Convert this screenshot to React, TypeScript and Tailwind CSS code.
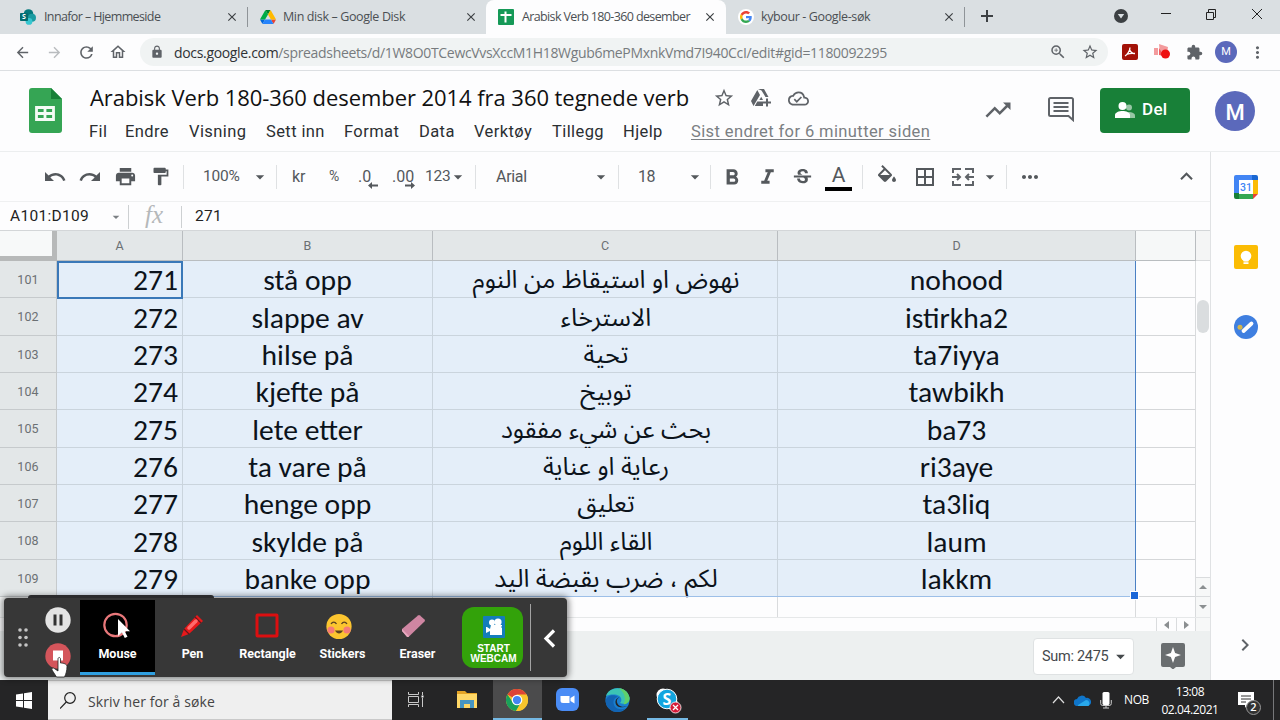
import type { ReactNode } from 'react'
import {
  MdArrowBack,
  MdArrowDropDown,
  MdArrowForward,
  MdBorderAll,
  MdClose,
  MdExtension,
  MdFormatBold,
  MdFormatItalic,
  MdFormatPaint,
  MdKeyboardArrowUp,
  MdLock,
  MdMoreHoriz,
  MdMoreVert,
  MdOutlineCloudDone,
  MdOutlineHome,
  MdPrint,
  MdRedo,
  MdRefresh,
  MdStarBorder,
  MdStrikethroughS,
  MdTrendingUp,
  MdUndo,
  MdOutlineZoomIn,
  MdChevronRight,
} from 'react-icons/md'

const rows = [
  { n: 101, id: '271', no: 'stå opp', ar: 'نهوض او استيقاظ من النوم', tr: 'nohood' },
  { n: 102, id: '272', no: 'slappe av', ar: 'الاسترخاء', tr: 'istirkha2' },
  { n: 103, id: '273', no: 'hilse på', ar: 'تحية', tr: 'ta7iyya' },
  { n: 104, id: '274', no: 'kjefte på', ar: 'توبيخ', tr: 'tawbikh' },
  { n: 105, id: '275', no: 'lete etter', ar: 'بحث عن شيء مفقود', tr: 'ba73' },
  { n: 106, id: '276', no: 'ta vare på', ar: 'رعاية او عناية', tr: 'ri3aye' },
  { n: 107, id: '277', no: 'henge opp', ar: 'تعليق', tr: 'ta3liq' },
  { n: 108, id: '278', no: 'skylde på', ar: 'القاء اللوم', tr: 'laum' },
  { n: 109, id: '279', no: 'banke opp', ar: 'لكم ، ضرب بقبضة اليد', tr: 'lakkm' },
]

const menus = [
  { label: 'Fil', className: 'w-9' },
  { label: 'Endre', className: 'w-16' },
  { label: 'Visning', className: 'w-[77px]' },
  { label: 'Sett inn', className: 'w-[78px]' },
  { label: 'Format', className: 'w-[75px]' },
  { label: 'Data', className: 'w-[55px]' },
  { label: 'Verktøy', className: 'w-[78px]' },
  { label: 'Tillegg', className: 'w-[71px]' },
  { label: 'Hjelp', className: 'w-[68px]' },
]

function SharepointIcon() {
  return (
    <svg className="shrink-0" width="16" height="16" viewBox="0 0 16 16">
      <circle cx="8.5" cy="5" r="4.8" fill="#03787c" />
      <circle cx="12" cy="8.8" r="4" fill="#1a9ba1" />
      <circle cx="9" cy="12.4" r="3.4" fill="#37c6d0" />
      <rect y="4" width="8" height="8" rx="0.8" fill="#036c70" />
      <text x="4" y="10.4" textAnchor="middle" fontSize="7" fontWeight="700" fill="#fff" fontFamily="Open Sans">S</text>
    </svg>
  )
}

function DriveIcon() {
  return (
    <svg className="shrink-0" width="16" height="14" viewBox="0 0 87.3 78">
      <path d="m6.6 66.85 3.85 6.65c.8 1.4 1.95 2.5 3.3 3.3l13.75-23.8h-27.5c0 1.55.4 3.1 1.2 4.5z" fill="#0066da" />
      <path d="m43.65 25-13.75-23.8c-1.35.8-2.5 1.9-3.3 3.3l-25.4 44a9.06 9.06 0 0 0 -1.2 4.5h27.5z" fill="#00ac47" />
      <path d="m73.55 76.8c1.35-.8 2.5-1.9 3.3-3.3l1.6-2.75 7.65-13.25c.8-1.4 1.2-2.95 1.2-4.5h-27.5l5.85 11.5z" fill="#ea4335" />
      <path d="m43.65 25 13.75-23.8c-1.35-.8-2.9-1.2-4.5-1.2h-18.5c-1.6 0-3.15.45-4.5 1.2z" fill="#00832d" />
      <path d="m59.8 53h-32.3l-13.75 23.8c1.35.8 2.9 1.2 4.5 1.2h50.8c1.6 0 3.15-.45 4.5-1.2z" fill="#2684fc" />
      <path d="m73.4 26.5-12.7-22c-.8-1.4-1.95-2.5-3.3-3.3l-13.75 23.8 16.15 28h27.45c0-1.55-.4-3.1-1.2-4.5z" fill="#ffba00" />
    </svg>
  )
}

function SheetsFavicon() {
  return (
    <svg className="shrink-0" width="16" height="16" viewBox="0 0 16 16">
      <rect width="16" height="16" rx="1" fill="#159957" />
      <path d="M7.5 2.5v11M2.5 6h11" stroke="#fff" strokeWidth="2" fill="none" />
    </svg>
  )
}

function GoogleIcon() {
  return (
    <svg className="shrink-0" width="16" height="16" viewBox="0 0 48 48">
      <circle cx="24" cy="24" r="24" fill="#fff" />
      <g transform="translate(6 6) scale(.75)">
        <path fill="#EA4335" d="M24 9.5c3.54 0 6.71 1.22 9.21 3.6l6.85-6.85C35.9 2.38 30.47 0 24 0 14.62 0 6.51 5.38 2.56 13.22l7.98 6.19C12.43 13.72 17.74 9.5 24 9.5z" />
        <path fill="#4285F4" d="M46.98 24.55c0-1.57-.15-3.09-.38-4.55H24v9.02h12.94c-.58 2.96-2.26 5.48-4.78 7.18l7.73 6c4.51-4.18 7.09-10.36 7.09-17.65z" />
        <path fill="#FBBC05" d="M10.53 28.59A14.5 14.5 0 0 1 9.77 24c0-1.6.27-3.14.76-4.59l-7.98-6.19A23.9 23.9 0 0 0 0 24c0 3.88.92 7.54 2.56 10.78l7.97-6.19z" />
        <path fill="#34A853" d="M24 48c6.48 0 11.93-2.13 15.89-5.81l-7.73-6c-2.15 1.45-4.92 2.3-8.16 2.3-6.26 0-11.57-4.22-13.47-9.91l-7.98 6.19C6.51 42.62 14.62 48 24 48z" />
      </g>
    </svg>
  )
}

function TabStrip() {
  return (
    <div className="flex h-[34px] shrink-0 bg-[#dadfe2] font-['Open_Sans','Noto_Sans',sans-serif] text-[12.5px] text-[#4b4f53]">
      <div className="flex w-[248px] items-center pl-5">
        <SharepointIcon />
        <span className="ml-2 w-[181px] shrink-0 whitespace-nowrap tracking-[-0.62px]">Innafor – Hjemmeside</span>
        <MdClose className="shrink-0 text-[#3c4043]" size={14} />
        <div className="ml-2 h-5 w-px shrink-0 bg-[#8f9498]" />
      </div>
      <div className="flex w-[238px] items-center pl-3">
        <DriveIcon />
        <span className="ml-[7px] w-[181px] shrink-0 whitespace-nowrap tracking-[-0.38px]">Min disk – Google Disk</span>
        <MdClose className="shrink-0 text-[#3c4043]" size={14} />
      </div>
      <div className="flex w-[240px] items-center rounded-t-lg bg-[#fdfdfe] pl-3">
        <SheetsFavicon />
        <span className="ml-2 w-[181px] shrink-0 whitespace-nowrap tracking-[-0.63px]">Arabisk Verb 180-360 desember</span>
        <MdClose className="shrink-0 text-[#3c4043]" size={14} />
      </div>
      <div className="flex w-[239px] items-center pl-3">
        <GoogleIcon />
        <span className="ml-[7px] w-[181px] shrink-0 whitespace-nowrap tracking-[-0.38px]">kybour - Google-søk</span>
        <MdClose className="shrink-0 text-[#3c4043]" size={14} />
        <div className="ml-2 h-5 w-px shrink-0 bg-[#8f9498]" />
      </div>
      <svg className="ml-4 mt-2.5" width="12" height="12" viewBox="0 0 12 12">
        <path d="M6 0v12M0 6h12" stroke="#3c4043" strokeWidth="2" />
      </svg>
      <svg className="ml-[121px] mt-[9px]" width="14" height="14" viewBox="0 0 14 14">
        <circle cx="7" cy="7" r="7" fill="#3c4043" />
        <path d="M3.8 5h6.4L7 9.5z" fill="#dadfe2" />
      </svg>
      <svg className="ml-[33px] mt-2" width="102" height="13" viewBox="0 0 102 13" fill="none" stroke="#222">
        <path d="M0 5.500h10M45.500 4.500h7v7h-7zM47.500 4.500v-3h7v8h-2M91 1l10 10M101 1l-10 10" />
      </svg>
    </div>
  )
}

function AddressBar() {
  return (
    <div className="flex h-[37px] shrink-0 items-center border-b border-[#dcdfe2] bg-[#fdfdfe] text-[#5f6368]">
      <MdArrowBack className="ml-3.5 shrink-0" size={17} />
      <MdArrowForward className="ml-[15px] shrink-0 text-[#b9bcbf]" size={17} />
      <MdRefresh className="ml-[14px] shrink-0" size={19} />
      <MdOutlineHome className="ml-[13px] shrink-0" size={18} />
      <div className="ml-[13px] flex h-[28px] w-[968px] shrink-0 items-center rounded-full bg-[#f0f3f3] pl-2.5 font-['Open_Sans','Noto_Sans',sans-serif] text-[14px]">
        <MdLock size={14} className="mr-[10px] shrink-0" />
        <div className="w-[875px] shrink-0 whitespace-nowrap tracking-[-0.33px] text-[#777b7e]">
          <span className="text-[#2f3235]">docs.google.com</span>/spreadsheets/d/1W8O0TCewcVvsXccM1H18Wgub6mePMxnkVmd7I940CcI/edit#gid=1180092295
        </div>
        <MdOutlineZoomIn className="shrink-0" size={18} />
        <MdStarBorder className="ml-[14px] shrink-0" size={18} />
      </div>
      <Extensions />
    </div>
  )
}

function Extensions() {
  return (
    <div className="ml-3.5 flex shrink-0 items-center">
      <svg width="16" height="16" viewBox="0 0 16 16">
        <rect width="16" height="16" rx="2" fill="#a31208" />
        <path d="M3 12c2-1 5-5 5-8.500M7.700 6c.8 2 3 3.500 5.300 3.500M4.500 10.500c2-.8 5-1.500 8-1" stroke="#fff" strokeWidth="1.300" fill="none" />
      </svg>
      <svg className="ml-4" width="17" height="16" viewBox="0 0 17 16">
        <path d="M0 4h4v7H0zM5 0l9 3-1 6-7 1z" fill="#f39b9d" />
        <path d="m5 4 5 8-5-1z" fill="#f05b60" />
        <circle cx="11.500" cy="10" r="4.500" fill="#ee1111" />
      </svg>
      <MdExtension className="ml-[15px] text-[#5f6368]" size={17} />
      <div className="ml-3 flex size-[22px] items-center justify-center rounded-full bg-[#5b69bb] text-[11px] text-white">M</div>
      <MdMoreVert className="ml-[11px] text-[#5f6368]" size={19} />
    </div>
  )
}

function AddToDriveIcon() {
  return (
    <svg className="ml-[15px] shrink-0" width="22" height="20" viewBox="0 0 22 20" fill="#5f6368">
      <path d="M8 1h6l4.500 8h-3L11.500 2.500zM7.300 2 10 7 3.500 18 1 13zM4.800 18l2.500-4.500H13V18z" />
      <path d="M11.200 8.800 13 12h-3.600z" />
      <path d="M16 10.500h2v3h3v2h-3v3h-2v-3h-3v-2h3z" />
    </svg>
  )
}

function DocHeader() {
  return (
    <div className="flex h-[81px] shrink-0 border-b border-[#eceeef]">
      <svg className="ml-[29px] mt-[17px] shrink-0" width="33" height="45" viewBox="0 0 33 45">
        <path d="M3 0h19l11 11v31a3 3 0 0 1-3 3H3a3 3 0 0 1-3-3V3a3 3 0 0 1 3-3z" fill="#35a554" />
        <path d="M22 0l11 11H22z" fill="#188038" />
        <path d="M7.500 19.500h17v12h-17zM7.500 25.500h17M16 19.500v12" fill="none" stroke="#f4fbf5" strokeWidth="2.800" />
      </svg>
      <div className="ml-[27px] w-[895px] shrink-0">
        <div className="mt-3 flex h-[30px] items-center text-[#5f6368]">
          <div className="-mt-px w-[624px] shrink-0 whitespace-nowrap pl-px font-['Open_Sans',sans-serif] text-[22px] tracking-[-0.06px] text-[#111]">
            Arabisk Verb 180-360 desember 2014 fra 360 tegnede verb
          </div>
          <MdStarBorder className="shrink-0" size={22} />
          <AddToDriveIcon />
          <MdOutlineCloudDone className="ml-4 shrink-0" size={21} />
        </div>
        <div className="mt-[9px] flex text-[16.5px] leading-5 tracking-[0.4px] text-[#2b2f32]">
          {menus.map((m) => (
            <div key={m.label} className={`${m.className} shrink-0 whitespace-nowrap`}>{m.label}</div>
          ))}
          <span className="whitespace-nowrap tracking-[0.4px] text-[#7b7f83] underline underline-offset-2">
            Sist endret for 6 minutter siden
          </span>
        </div>
      </div>
      <MdTrendingUp className="-ml-px mt-6 shrink-0 text-[#5f6368]" size={30} />
      <svg className="ml-[35px] mt-[26px] shrink-0" width="26" height="25" viewBox="0 0 26 25">
        <path d="M2.500 1h21A1.500 1.500 0 0 1 25 2.500V23l-4.500-4h-18A1.500 1.500 0 0 1 1 17.500v-15A1.500 1.500 0 0 1 2.500 1z" fill="none" stroke="#5f6368" strokeWidth="2" />
        <path d="M5.500 6h15M5.500 10h15M5.500 14h15" stroke="#5f6368" strokeWidth="2" />
      </svg>
      <div className="ml-[26px] mt-[17px] flex h-[45px] w-[90px] shrink-0 items-center rounded bg-[#188038] pb-px pl-[15px] text-[17px] font-medium tracking-[0.3px] text-white">
        <svg className="mr-[7px] shrink-0" width="20" height="16" viewBox="0 0 20 16" fill="#fff">
          <circle cx="14" cy="5.500" r="3" opacity=".55" />
          <path d="M13 10c4 0 7 1.500 7 3.500V16h-6z" opacity=".55" />
          <circle cx="7.500" cy="4" r="4" />
          <path d="M0 16v-3c0-2.500 4-4 7.500-4s7.500 1.500 7.500 4v3z" />
        </svg>
        <span>Del</span>
      </div>
      <div className="ml-[25px] mt-5 flex size-10 shrink-0 items-center justify-center rounded-full bg-[#5b69bb] pt-0.5 text-[22px] font-medium text-white">
        M
      </div>
    </div>
  )
}

function Divider({ className }: { className: string }) {
  return <div className={`${className} h-6 w-px shrink-0 bg-[#dfe1e3]`} />
}

function DecimalIcon({ text, className, back }: { text: string; className: string; back?: boolean }) {
  return (
    <span className={`${className} relative shrink-0 text-[16px]`}>
      {text}
      <svg className={back ? 'absolute left-2.5 top-[17px]' : 'absolute left-[13px] top-[17px]'} width="10" height="7" viewBox="0 0 10 7">
        <path d={back ? 'M10 2.500H4V0L0 3.500 4 7V4.500h6z' : 'M0 2.500h6V0l4 3.500L6 7V4.500H0z'} fill="#54585c" />
      </svg>
    </span>
  )
}

function Toolbar() {
  return (
    <div className="flex h-[50px] shrink-0 items-center border-b border-[#eff0f1] text-[16px] text-[#54585c]">
      <MdUndo className="ml-[43px] shrink-0" size={24} />
      <MdRedo className="ml-[11px] shrink-0" size={24} />
      <MdPrint className="ml-3 shrink-0" size={23} />
      <MdFormatPaint className="ml-[13px] shrink-0" size={21} />
      <Divider className="ml-3" />
      <span className="ml-[19px] w-[41px] shrink-0 text-[15.5px] tracking-[-0.2px]">100%</span>
      <MdArrowDropDown className="ml-[6px] shrink-0" size={20} />
      <Divider className="ml-1.5" />
      <span className="ml-[15px] w-[37px] shrink-0">kr</span>
      <span className="w-[29px] shrink-0 text-[14px]">%</span>
      <DecimalIcon text=".0" className="w-[34px]" back />
      <DecimalIcon text=".00" className="w-[33px]" />
      <span className="w-[24px] shrink-0 text-[15.5px] tracking-[-0.2px]">123</span>
      <MdArrowDropDown className="ml-[-1px] shrink-0" size={20} />
      <Divider className="ml-[7px]" />
      <span className="ml-5 w-[94px] shrink-0 tracking-[-0.3px]">Arial</span>
      <MdArrowDropDown className="ml-px shrink-0" size={20} />
      <Divider className="ml-[7px]" />
      <span className="ml-[19px] w-[47px] shrink-0 tracking-[-0.4px]">18</span>
      <MdArrowDropDown className="shrink-0" size={20} />
      <Divider className="ml-[5px]" />
      <MdFormatBold className="ml-2 mt-0.5 shrink-0" size={26} />
      <MdFormatItalic className="ml-[10px] mt-0.5 shrink-0" size={25} />
      <MdStrikethroughS className="ml-[11px] mt-0.5 shrink-0" size={23} />
      <div className="ml-[11px] flex h-7 w-[27px] shrink-0 items-start justify-center border-b-4 border-black text-[21px] leading-[24px]">A</div>
      <Divider className="ml-[10px]" />
      <svg className="ml-3 shrink-0" width="24" height="24" viewBox="0 0 24 24" fill="currentColor">
        <path d="M16.560 8.940 7.620 0 6.210 1.410l2.380 2.380-5.150 5.150c-.59.59-.59 1.540 0 2.120l5.500 5.500c.29.29.68.44 1.060.44s.77-.15 1.060-.44l5.500-5.500c.59-.58.59-1.530 0-2.120zM5.210 10 10 5.210 14.790 10zM19 11.500s-2 2.170-2 3.500c0 1.100.9 2 2 2s2-.9 2-2c0-1.330-2-3.500-2-3.500z" />
      </svg>
      <MdBorderAll className="ml-3.5 shrink-0" size={24} />
      <svg className="ml-[15px] shrink-0" width="22" height="18" viewBox="0 0 22 18" fill="none" stroke="#5f6368" strokeWidth="2">
        <path d="M9 1H1v4M13 1h8v4M9 17H1v-4M13 17h8v-4M0 9h7M22 9h-7M5 6l3 3-3 3M17 6l-3 3 3 3" />
      </svg>
      <MdArrowDropDown className="ml-[6px] shrink-0" size={20} />
      <Divider className="ml-[6px]" />
      <MdMoreHoriz className="ml-[11px] shrink-0" size={24} />
      <MdKeyboardArrowUp className="ml-[132px] shrink-0" size={25} />
    </div>
  )
}

function FormulaBar() {
  return (
    <div className="flex h-[29px] shrink-0 items-center border-b border-[#d3d6d8] pt-0.5 text-[15.5px] text-[#222]">
      <span className="ml-2.5 w-[98px] shrink-0 tracking-[0.3px]">A101:D109</span>
      <MdArrowDropDown className="shrink-0 text-[#7b7f83]" size={16} />
      <div className="ml-1 h-6 w-px bg-[#cdd0d2]" />
      <span className="ml-4 w-9 pb-1 font-['Liberation_Serif',serif] text-[25px] italic leading-6 text-[#b5b8ba]">fx</span>
      <div className="h-[22px] w-px bg-[#cdd0d2]" />
      <span className="ml-[13px] tracking-[0.3px]">271</span>
    </div>
  )
}

function ColumnHead({ label, className }: { label?: string; className: string }) {
  return (
    <div className={`${className} flex shrink-0 items-center justify-center border-b border-r border-[#b9bdc0] pt-px text-[12.5px] text-[#6b7073]`}>
      {label}
    </div>
  )
}

function Cell({ className, children }: { className: string; children?: ReactNode }) {
  return (
    <div className={`${className} flex shrink-0 items-center whitespace-nowrap border-b border-r border-[#cad4dd] bg-[#e4eef9]`}>
      {children}
    </div>
  )
}

function ScrollButton({ className, d }: { className: string; d: string }) {
  return (
    <div className={`${className} flex items-center justify-center border-[#dadcde] bg-[#f7f8f8]`}>
      <svg width="8" height="6" viewBox="0 0 8 6"><path d={d} fill="#8b8f91" /></svg>
    </div>
  )
}

function Grid() {
  return (
    <div className="flex h-[386px] shrink-0 overflow-hidden">
      <div className="relative w-[1196px] shrink-0 border-r border-[#d9dbdd]">
        <div className="flex h-[30px]">
          <div className="w-[57px] shrink-0 border-b-[5px] border-r-[5px] border-[#b7b9b9] bg-[#f7f9f9]" />
          <ColumnHead label="A" className="w-[126px] bg-[#e3e7e8]" />
          <ColumnHead label="B" className="w-[250px] bg-[#e3e7e8]" />
          <ColumnHead label="C" className="w-[345px] bg-[#e3e7e8]" />
          <ColumnHead label="D" className="w-[358px] bg-[#e3e7e8]" />
          <ColumnHead className="w-[60px] bg-[#f6f8f8]" />
        </div>
        {rows.map((r) => (
          <div key={r.n} className="flex h-[37.35px] font-['Carlito','Lato',sans-serif] text-[29.6px] leading-none text-[#0c131b]">
            <div className="flex w-[57px] shrink-0 items-center justify-center border-b border-r border-[#c6cacc] bg-[#e3e7e8] pt-0.5 font-[Roboto] text-[12.5px] tracking-[0.2px] text-[#6b7073]">
              {r.n}
            </div>
            <Cell className="w-[126px] justify-end pr-1 pt-1">{r.id}</Cell>
            <Cell className="w-[250px] justify-center pt-1">{r.no}</Cell>
            <Cell className="w-[345px] justify-center pl-0.5 pt-[3px]">
              <span dir="rtl" className="font-['Noto_Sans_Arabic','Noto_Sans',sans-serif] text-[25px]">{r.ar}</span>
            </Cell>
            <Cell className="w-[358px] justify-center pt-1">{r.tr}</Cell>
            <div className="w-[60px] border-b border-[#d5d7d9]" />
          </div>
        ))}
        <div className="flex h-5">
          <div className="w-[57px] border-r border-[#c6cacc] bg-[#f6f8f8]" />
          <div className="w-[376px] border-r border-[#d9dbdd]" />
          <div className="w-[345px] border-r border-[#d9dbdd]" />
          <div className="w-[358px] border-r border-[#d9dbdd]" />
        </div>
        <div className="absolute left-[57px] top-[30px] h-[336px] w-[1079px] border-b border-r border-b-[#9dbfe8] border-r-[#4a80c4]" />
        <div className="absolute left-[57px] top-[30px] h-[38px] w-[126px] border-2 border-[#3a78b8]" />
        <div className="absolute left-[1130px] top-[360px] size-[9px] border border-white bg-[#1b67d8]" />
      </div>
      <div className="flex w-[14px] flex-col">
        <div className="h-[30px] border-b border-[#d9dbdd] bg-[#f4f5f5]" />
        <div className="mx-px mt-[39px] h-[33px] rounded-full bg-[#dadddf]" />
        <div className="flex-1" />
        <ScrollButton className="h-5 w-full border-y" d="M0 5l4-4 4 4z" />
        <ScrollButton className="h-5 w-full" d="M0 1l4 4 4-4z" />
      </div>
    </div>
  )
}

function BottomBar() {
  return (
    <>
      <div className="flex h-[14px] shrink-0 border-t border-[#e6e8e9]">
        <div className="w-[1156px]" />
        <div className="flex w-5 items-center justify-center border-l border-[#dadcde]">
          <svg width="5" height="8" viewBox="0 0 5 8"><path d="M5 0v8L0 4z" fill="#8b8f91" /></svg>
        </div>
        <div className="flex w-5 items-center justify-center border-x border-[#dadcde]">
          <svg width="5" height="8" viewBox="0 0 5 8"><path d="M0 0v8l5-4z" fill="#8b8f91" /></svg>
        </div>
        <div className="flex-1 bg-[#f7f8f8]" />
      </div>
      <div className="flex h-[49px] shrink-0 bg-[#edf0f0]">
        <div className="ml-[1033px] mt-[7px] flex h-[37px] w-[101px] items-center rounded border border-[#dfe2e3] bg-white pl-2 text-[14.5px] text-[#45494c]">
          <span className="w-[68px] shrink-0 whitespace-nowrap tracking-[-0.3px]">Sum: 2475</span>
          <MdArrowDropDown className="shrink-0" size={21} />
        </div>
        <svg className="ml-[27px] mt-3" width="24" height="26" viewBox="0 0 24 26">
          <path d="M2 0h20a2 2 0 0 1 2 2v20a2 2 0 0 1-2 2h-7l-3 2.500L9 24H2a2 2 0 0 1-2-2V2a2 2 0 0 1 2-2z" fill="#6a6e70" />
          <path d="M12 4l2.100 5.900L20 12l-5.900 2.100L12 20l-2.100-5.900L4 12l5.900-2.100z" fill="#fff" />
        </svg>
      </div>
    </>
  )
}

function SidePanel() {
  return (
    <div className="flex w-[70px] shrink-0 flex-col items-center border-l border-[#e0e2e4] pl-px">
      <svg className="mt-[23px]" width="24" height="24" viewBox="0 0 24 24">
        <path d="M2 0h16v5H5v13H0V2a2 2 0 0 1 2-2z" fill="#4285f4" />
        <path d="M18 0h4a2 2 0 0 1 2 2v3h-6z" fill="#1967d2" />
        <path d="M19 5h5v14h-5z" fill="#fbbc04" />
        <path d="M5 19h14v5H5z" fill="#34a853" />
        <path d="M0 18h5v6H2a2 2 0 0 1-2-2z" fill="#188038" />
        <path d="M19 19h5l-5 5z" fill="#ea4335" />
        <path d="M5 5h14v14H5z" fill="#fff" />
        <text x="12" y="15.800" textAnchor="middle" fontSize="10.500" fontWeight="500" fill="#4285f4" fontFamily="Roboto">31</text>
      </svg>
      <svg className="mt-[46px]" width="24" height="24" viewBox="0 0 24 24">
        <rect width="24" height="24" rx="2" fill="#fbbc04" />
        <circle cx="12" cy="11" r="5.300" fill="#fff" />
        <path d="M9.500 14h5v2.500h-5zM9.500 17.300h5V19h-5z" fill="#fff" />
      </svg>
      <svg className="mt-[46px]" width="24" height="24" viewBox="0 0 24 24">
        <circle cx="12" cy="12" r="12" fill="#3f7fe0" />
        <path d="M9.500 16 17.500 8.500" stroke="#fff" strokeWidth="3.800" strokeLinecap="round" />
        <circle cx="6" cy="12.300" r="2.500" fill="#d6b64a" />
      </svg>
      <MdChevronRight className="mr-0.5 mt-[294px] text-[#5f6368]" size={24} />
    </div>
  )
}

function Tool({ label, active, children }: { label: string; active?: boolean; children: ReactNode }) {
  return (
    <div className={`flex h-[75px] w-[75px] shrink-0 flex-col items-center pt-3 ${active ? 'border-b-[3px] border-[#2f9fe0] bg-black' : ''}`}>
      <div className="flex h-[28px] items-center">{children}</div>
      <span className="mt-[6px] text-[12.5px] font-bold leading-4 text-white">{label}</span>
    </div>
  )
}

function RecorderBar() {
  return (
    <div className="absolute left-1 top-[598px] z-10 flex h-[79px] w-[563px] rounded bg-[#373737] pt-0.5 shadow-[0_0_6px_2px_rgba(0,0,0,0.45)]">
      <div className="absolute -top-[3px] left-6 h-[3px] w-[186px] rounded-t bg-[#2b2b2d]" />
      <svg className="ml-3.5 mt-[28px] shrink-0" width="10" height="20" viewBox="0 0 10 20" fill="#c5c5c5">
        <circle cx="2" cy="2" r="1.800" /><circle cx="8" cy="2" r="1.800" />
        <circle cx="2" cy="9.500" r="1.800" /><circle cx="8" cy="9.500" r="1.800" />
        <circle cx="2" cy="17" r="1.800" /><circle cx="8" cy="17" r="1.800" />
      </svg>
      <div className="ml-[17px] mr-[9px] mt-[7px] flex shrink-0 flex-col gap-[10px]">
        <svg width="26" height="26" viewBox="0 0 26 26">
          <circle cx="13" cy="13" r="12.700" fill="#e4e4e4" />
          <path d="M10 7.500v11M16 7.500v11" stroke="#333" strokeWidth="3" />
        </svg>
        <svg width="26" height="26" viewBox="0 0 26 26" overflow="visible">
          <circle cx="13" cy="13" r="12.700" fill="#d4555b" />
          <path d="M8 7.500h10v10H8z" fill="#fff" />
          <path d="M13 16c0-2 2.500-2 2.500 0v4c3 0 6.500 1 6.500 3.500 0 4-1 7.500-2.500 10.500h-8L7 27c-.8-1.500 1-2.700 2.300-1.500L13 28z" fill="#fff" stroke="#222" strokeWidth=".8" />
        </svg>
      </div>
      <Tool label="Mouse" active>
        <svg className="-ml-0.5" width="30" height="28" viewBox="0 0 30 28">
          <circle cx="13.500" cy="13" r="11.200" fill="none" stroke="#e9787b" strokeWidth="2.200" />
          <path d="M16 7v17l4-3.500 2.800 5.500 2.700-1.300-2.800-5.400H28z" fill="#fff" />
        </svg>
      </Tool>
      <Tool label="Pen">
        <svg width="25" height="26" viewBox="0 0 25 26">
          <path d="M1 24 4 16 17 2l6 6L9 21z" fill="#e8181a" />
          <path d="M4 16l5.500 5.500M15 4l6 6" stroke="#66151a" strokeWidth="1.200" />
          <path d="M9 15l7-7" stroke="#ff6b6b" strokeWidth="3.500" strokeLinecap="round" />
        </svg>
      </Tool>
      <Tool label="Rectangle">
        <svg className="-ml-0.5" width="24" height="26" viewBox="0 0 24 26">
          <rect x="2" y="2" width="20" height="21" rx=".5" fill="none" stroke="#dc0f10" strokeWidth="3" />
        </svg>
      </Tool>
      <Tool label="Stickers">
        <svg className="-ml-[7px]" width="26" height="27" viewBox="0 0 26 27">
          <circle cx="13" cy="13.500" r="12.600" fill="#fcc52f" />
          <circle cx="5" cy="17" r="3.600" fill="#f57b76" /><circle cx="21" cy="17" r="3.600" fill="#f57b76" />
          <path d="M5 11c1.500-2.500 4-2.500 5.500 0M15.500 11c1.500-2.500 4-2.500 5.500 0" fill="none" stroke="#5d4320" strokeWidth="1.300" />
          <path d="M9 17.500c2 4 6 4 8 0z" fill="#5d4320" />
        </svg>
      </Tool>
      <Tool label="Eraser">
        <svg className="-ml-2" width="25" height="26" viewBox="0 0 25 26">
          <path d="M1 16 17 2.500q1-.8 2 0l4.500 4q1 1 0 2L8 23.500H6L1 18z" fill="#cf86a2" />
          <path d="M1 16l6.500 6.500L8 24H6L1 18z" fill="#e8a9bf" />
        </svg>
      </Tool>
      <div className="ml-[7px] mt-[7px] flex h-[61px] w-[61px] shrink-0 flex-col items-center rounded-xl bg-[#33a20a] pl-0.5 pt-[9px] text-center font-['Liberation_Sans',sans-serif] text-[10px] font-bold leading-[10px] text-white">
        <svg className="mb-[6px]" width="22" height="22" viewBox="0 0 22 22">
          <rect width="22" height="22" rx="1" fill="#147dbb" />
          <circle cx="9" cy="6.500" r="3" fill="#fff" /><circle cx="15" cy="6" r="3.600" fill="#fff" />
          <path d="M8 9h11v1l-1 1 1 1v7H7v-4l-4 2v-6h1l3 2z" fill="#fff" />
        </svg>
        <span>START</span>
        <span>WEBCAM</span>
      </div>
      <div className="ml-[7px] mt-1 h-[67px] w-px shrink-0 bg-[#a3a3a3]" />
      <svg className="ml-3 mt-[29px]" width="13" height="19" viewBox="0 0 13 19">
        <path d="M11 1.500 3 9.500l8 8" fill="none" stroke="#fff" strokeWidth="3.200" />
      </svg>
    </div>
  )
}

function Taskbar() {
  return (
    <div className="flex h-10 shrink-0 bg-[#252526] font-['Open_Sans','Noto_Sans',sans-serif] text-white">
      <svg className="ml-4 mt-3 shrink-0" width="16" height="17" viewBox="0 0 16 17" fill="#fff">
        <path d="M0 2.500 7 1.500V8H0zM8 1.300 16 0v8H8zM0 9h7v6.500l-7-1zM8 9h8v8l-8-1.300z" />
      </svg>
      <div className="ml-4 flex w-[344px] shrink-0 items-center border-y border-[#c9c9c9] bg-[#efefef] pl-3 text-[14px] text-[#444]">
        <svg width="16" height="17" viewBox="0 0 16 17" fill="none" stroke="#222" strokeWidth="1.200">
          <circle cx="10" cy="6" r="5.300" /><path d="M6.300 10 0 16.500" />
        </svg>
        <span className="ml-3 mt-0.5 whitespace-nowrap tracking-[0.1px]">Skriv her for å søke</span>
      </div>
      <svg className="ml-4 mt-3 shrink-0" width="16" height="16" viewBox="0 0 16 16" fill="none" stroke="#c8c8c8">
        <path d="M.5 0v2.500h10V0M.5 4.500h10v6H.5zM.5 15v-2.500h10V15M14.500 0v3M14.500 6v9" /><path d="M13.500 4.500h2" stroke="#fff" strokeWidth="2" />
      </svg>
      <svg className="ml-[32px] mt-[10px] shrink-0" width="22" height="19" viewBox="0 0 22 19">
        <path d="M1 1h8l2 2h10v15H1z" fill="#e5a526" /><path d="M1 4h20v14H1z" fill="#ffd867" />
        <path d="M4 18v-8h14v8h-4v-4H8v4z" fill="#4695c2" />
      </svg>
      <div className="ml-[15px] flex w-[49px] shrink-0 border-b-2 border-[#75b9e4] bg-[#4b4b4c] pl-[13px] pt-[9px]">
        <svg width="22" height="22" viewBox="0 0 24 24">
          <circle cx="12" cy="12" r="12" fill="#f8c52c" />
          <path d="M12 12 1.600 6A12 12 0 0 1 22.400 6z" fill="#dd4437" />
          <path d="M1.600 6A12 12 0 0 0 11 24l5-9-9-1z" fill="#19a05b" />
          <path d="M12 6h10.400A12 12 0 0 1 11 24l5.500-9z" fill="#f8c52c" />
          <circle cx="12" cy="12" r="5.800" fill="#fff" /><circle cx="12" cy="12" r="4.500" fill="#4285f4" />
        </svg>
      </div>
      <svg className="ml-[14px] mt-2 shrink-0" width="23" height="23" viewBox="0 0 23 23">
        <rect width="23" height="23" rx="6" fill="#4a8cf5" />
        <path d="M4.500 8h9v7H7q-2.500 0-2.500-2.500zM14.500 10l4-2.500v8l-4-2.500z" fill="#fff" />
      </svg>
      <svg className="ml-[26px] mt-2 shrink-0" width="25" height="24" viewBox="0 0 25 24">
        <circle cx="12.500" cy="12" r="12" fill="#1a7fd0" />
        <path d="M1 8C4-2 21-3 24.500 9c.8 6-6 8-9.500 6 3-3 1-8-5-8.500C6 6.300 2.500 7 1 8z" fill="#3cc4b4" />
        <path d="M14 .2c6 .5 10 5 10.500 10 .3 4-3 6-6 6 3-5 1-12-4.500-16z" fill="#5fd16b" />
        <path d="M.6 13C1.500 7 9 5.500 13 9c-4 .5-6 5-3.500 9 2 3.500 7 4 11 2.500C14 27 1 24 .6 13z" fill="#1263b2" />
        <path d="M14.500 9.500c-3 1-3.500 4.500-1 7.500 2 2 6 2.300 9.500 1-6 2.500-12 1.500-12.500-3.500-.2-2.500 1.500-5 4-5z" fill="#252526" />
      </svg>
      <div className="ml-[17px] flex w-[41px] shrink-0 border-b-2 border-[#75b9e4] pl-[9px] pt-2">
        <svg width="26" height="26" viewBox="0 0 26 26" overflow="visible">
          <circle cx="7" cy="7" r="6.500" fill="#fff" /><circle cx="15" cy="15" r="6.500" fill="#fff" />
          <circle cx="11" cy="11" r="9.800" fill="#13a5df" stroke="#fff" />
          <text x="11" y="16.500" textAnchor="middle" fontSize="16" fontWeight="700" fill="#fff" fontFamily="Open Sans">S</text>
          <circle cx="19.500" cy="19.500" r="5.500" fill="#d51b38" stroke="#fff" strokeWidth=".8" />
          <path d="M17 17l5 5M22 17l-5 5" stroke="#fff" strokeWidth="1.300" />
        </svg>
      </div>
      <div className="ml-[364px] flex shrink-0 items-center">
        <svg width="13" height="8" viewBox="0 0 13 8"><path d="M1 7l5.500-6L12 7" fill="none" stroke="#ddd" strokeWidth="1.200" /></svg>
        <svg className="ml-[9px]" width="17" height="11" viewBox="0 0 17 11">
          <path d="M3.500 11a3.500 3.500 0 0 1-.5-7A5 5 0 0 1 12 3a4 4 0 0 1 2 8z" fill="#0f75c9" />
          <path d="M4 10 12 5a3.500 3.500 0 0 1 2.500 6H4z" fill="#29a8ea" />
        </svg>
        <svg className="ml-[9px]" width="12" height="17" viewBox="0 0 12 17">
          <rect x="2.500" width="7" height="13" rx="1.500" fill="#fff" /><path d="M.7 8v3.500q0 2 2 2h6.600q2 0 2-2V8M6 13v3M3 16h6" fill="none" stroke="#ccc" />
        </svg>
        <span className="ml-3 w-[36px] text-[12px] tracking-[-0.4px]">NOB</span>
        <div className="flex w-[60px] flex-col items-center whitespace-nowrap pt-px text-[12px] leading-[18px] tracking-[-0.4px]">
          <span>13:08</span>
          <span>02.04.2021</span>
        </div>
        <div className="relative ml-[18px]">
          <svg width="17" height="17" viewBox="0 0 17 17">
            <path d="M0 0h16v13H9l-2 3v-3H0z" fill="#fff" /><path d="M3 4h10M3 7h10M3 10h5" stroke="#333" />
          </svg>
          <div className="absolute left-2 top-2 flex size-[15px] items-center justify-center rounded-full border border-[#999] bg-[#333] text-[11px] font-semibold">2</div>
        </div>
        <div className="ml-[18px] h-10 w-px bg-[#77787a]" />
      </div>
    </div>
  )
}

export default function App() {
  return (
    <div className="relative flex h-[720px] w-[1280px] flex-col overflow-hidden bg-[#fdfdfe] font-[Roboto,sans-serif]">
      <TabStrip />
      <AddressBar />
      <DocHeader />
      <div className="flex h-[528px] shrink-0">
        <div className="flex w-[1210px] shrink-0 flex-col">
          <Toolbar />
          <FormulaBar />
          <Grid />
          <BottomBar />
        </div>
        <SidePanel />
      </div>
      <Taskbar />
      <RecorderBar />
    </div>
  )
}
